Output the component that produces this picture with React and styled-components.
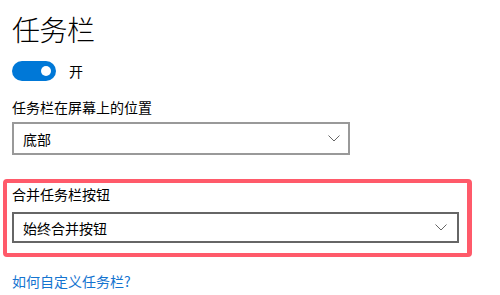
import React from "react";
import styled, { createGlobalStyle } from "styled-components";

const Global = createGlobalStyle`
  html, body { margin: 0; padding: 0; background: #fff; }
  body { font-family: "Noto Sans CJK SC", "Noto Sans", sans-serif; color: #000; }
`;

const Page = styled.div`
  position: relative;
  width: 500px;
  height: 295px;
  overflow: hidden;
  padding-left: 12px;
  box-sizing: border-box;
`;

const Title = styled.h1`
  margin: 10px 0 0;
  font-size: 28px;
  font-weight: 300;
  line-height: 38px;
  letter-spacing: -0.5px;
`;

const ToggleRow = styled.div`
  display: flex;
  align-items: center;
  gap: 13px;
  margin-top: 13px;
  height: 20px;
  font-size: 14px;
`;

const Track = styled.div`
  width: 44px;
  height: 20px;
  border-radius: 10px;
  background: #0078d7;
  display: flex;
  align-items: center;
  justify-content: flex-end;
  padding-right: 5px;
  box-sizing: border-box;
`;

const Knob = styled.div`
  width: 10px;
  height: 10px;
  border-radius: 50%;
  background: #fff;
`;

const Label = styled.div`
  margin-top: ${p => p.$mt}px;
  font-size: 14px;
  line-height: 20px;
  height: 20px;
`;

const Select = styled.div`
  margin-top: ${p => p.$mt}px;
  width: ${p => p.$w}px;
  height: ${p => p.$h}px;
  box-sizing: border-box;
  border: 2px solid ${p => p.$border};
  display: flex;
  align-items: center;
  justify-content: space-between;
  padding: 0 ${p => p.$pr}px 0 9px;
  font-size: 14px;
`;

const Link = styled.a`
  display: block;
  margin-top: 28px;
  font-size: 14px;
  line-height: 20px;
  color: #1474d0;
  text-decoration: none;
`;

const Highlight = styled.div`
  position: absolute;
  left: 3px;
  top: 179px;
  width: 469px;
  height: 78px;
  box-sizing: border-box;
  border: 4px solid #ff5a6a;
  border-right-width: 5px;
  border-radius: 4px;
  pointer-events: none;
`;

const Chevron = () => (
  <svg width="12" height="7" viewBox="0 0 12 7">
    <polyline points="0.5,0.5 6,6 11.5,0.5" fill="none" stroke="#666" strokeWidth="1" />
  </svg>
);

export default function App() {
  return (
    <Page>
      <Global />
      <Title>任务栏</Title>
      <ToggleRow>
        <Track><Knob /></Track>
        <span>开</span>
      </ToggleRow>
      <Label $mt={16}>任务栏在屏幕上的位置</Label>
      <Select $mt={5} $w={338} $h={33} $border="#999" $pr={8}>
        <span>底部</span>
        <Chevron />
      </Select>
      <Label $mt={29}>合并任务栏按钮</Label>
      <Select $mt={8} $w={447} $h={31} $border="#666" $pr={10}>
        <span>始终合并按钮</span>
        <Chevron />
      </Select>
      <Link href="#">如何自定义任务栏?</Link>
      <Highlight />
    </Page>
  );
}
